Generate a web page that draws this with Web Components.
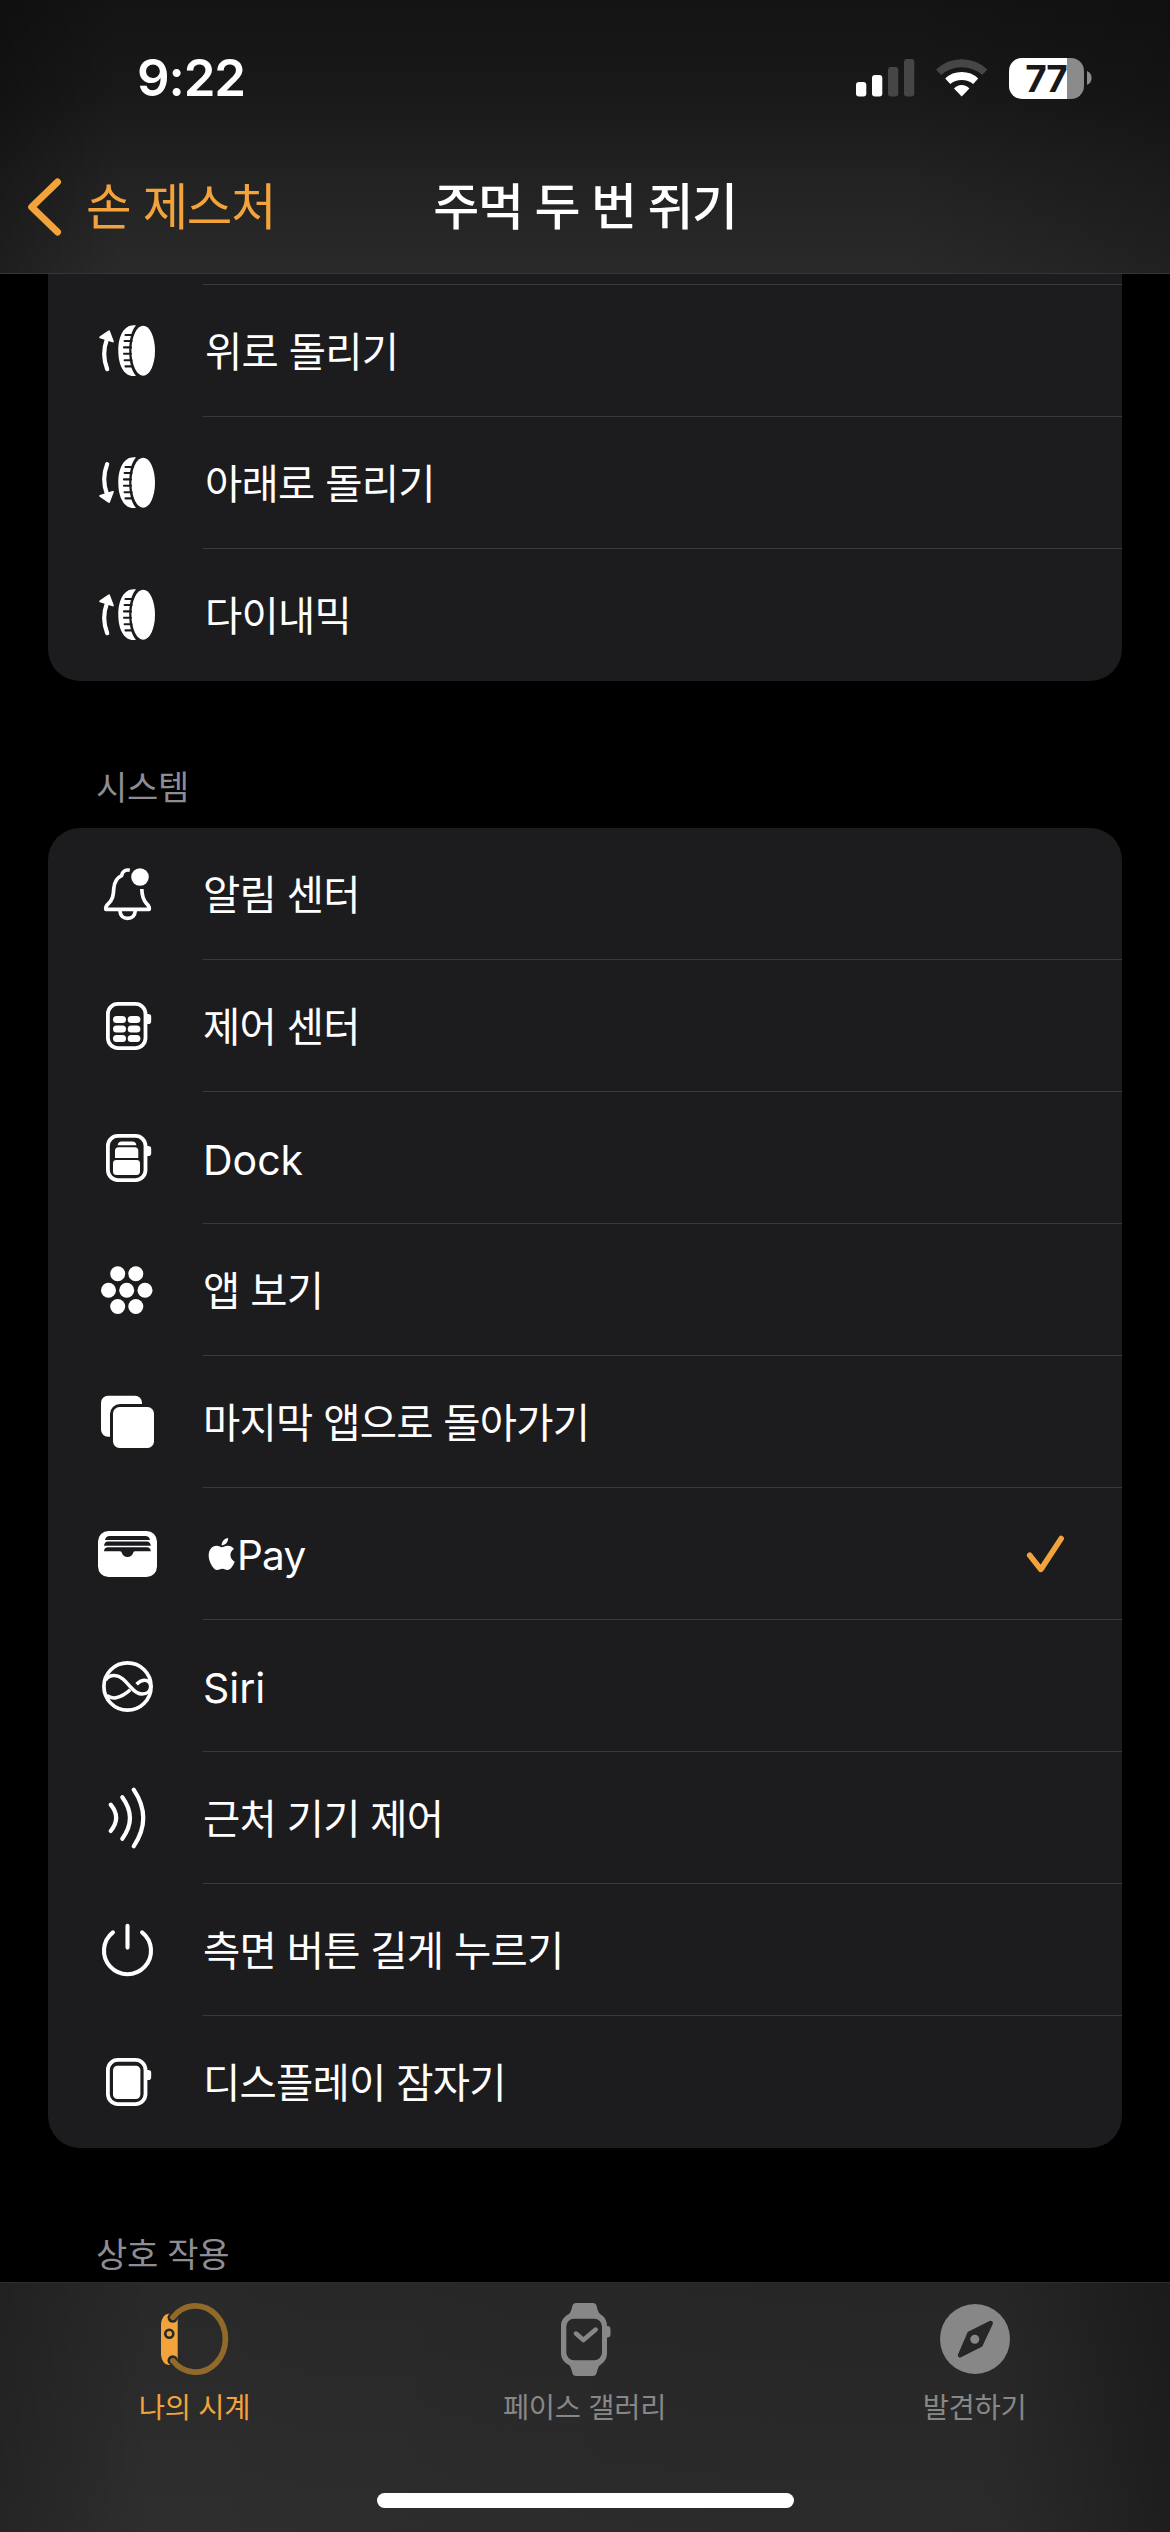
<!DOCTYPE html>
<html lang="ko">
<head>
<meta charset="utf-8">
<title>주먹 두 번 쥐기</title>
<style>
html, body { margin: 0; padding: 0; background: #000; }
body { font-family: Inter, "Noto Sans CJK KR", sans-serif; color: #fff; --accent: #f2a33b; --card: #1c1c1e; --line: #3a3a3c; }
</style>
</head>
<body>
<watch-screen>
  <status-bar slot="top" time="9:22" battery="77"></status-bar>
  <nav-header slot="top" back="손 제스처">주먹 두 번 쥐기</nav-header>

  <settings-card continued>
    <action-row icon="crown-up" inset>위로 돌리기</action-row>
    <action-row icon="crown-down" inset>아래로 돌리기</action-row>
    <action-row icon="crown-up" inset last>다이내믹</action-row>
  </settings-card>
  <section-title>시스템</section-title>
  <settings-card>
    <action-row icon="bell">알림 센터</action-row>
    <action-row icon="control">제어 센터</action-row>
    <action-row icon="dock" latin>Dock</action-row>
    <action-row icon="apps">앱 보기</action-row>
    <action-row icon="last-app">마지막 앱으로 돌아가기</action-row>
    <action-row icon="wallet" checked><apple-mark></apple-mark>Pay</action-row>
    <action-row icon="siri" latin>Siri</action-row>
    <action-row icon="waves">근처 기기 제어</action-row>
    <action-row icon="power">측면 버튼 길게 누르기</action-row>
    <action-row icon="display" last>디스플레이 잠자기</action-row>
  </settings-card>
  <section-title>상호 작용</section-title>

  <tab-bar slot="bottom">
    <tab-item icon="my-watch" active>나의 시계</tab-item>
    <tab-item icon="faces">페이스 갤러리</tab-item>
    <tab-item icon="discover">발견하기</tab-item>
  </tab-bar>
</watch-screen>

<script>
const watchBody = `<rect x="19.9" y="17.9" width="37.6" height="44.2" rx="10" fill="none" stroke="currentColor" stroke-width="3.8"/>
  <path d="M59 28h1.4a2.8 2.8 0 0 1 2.8 2.8v4.4a2.8 2.8 0 0 1-2.8 2.8H59z"/>`;

const crownWheel = `<ellipse cx="55.2" cy="39.7" rx="11.8" ry="25"/>
  <path d="M48 14.6C37 12.6 30.3 24 30.3 39.7S37 66.8 48 64.8C43.4 60 41.2 50 41.2 39.7S43.4 19.4 48 14.6z"/>
  <path d="M37.5 24h7M36.6 30h7M36 36.4h7M36 42.8h7M36.6 49.2h7M37.5 55.4h7" stroke="var(--card)" stroke-width="2.1" fill="none" stroke-linecap="round"/>`;

const crownArrow = `<path d="M19.2 58.2C15.2 48 15.2 38 19 28" fill="none" stroke="currentColor" stroke-width="4.2" stroke-linecap="round"/>
  <path d="M21 20.4L12.2 26.4L24.8 30.4z" stroke="currentColor" stroke-width="2" stroke-linejoin="round"/>`;

const ICONS = {
  'crown-up': crownWheel + crownArrow,
  'crown-down': crownWheel + `<g transform="translate(0 79.3) scale(1 -1)">${crownArrow}</g>`,
  'bell': `<circle cx="52" cy="23" r="8.8"/>
    <g fill="none" stroke="currentColor" stroke-width="3.7" stroke-linecap="butt" stroke-linejoin="round">
    <path d="M41.8 16.2C37.6 15.4 34.4 17.6 33.6 21.6C28.4 24 26.2 28.4 25.8 34.4C25.4 42 24.6 45.6 20.4 49.6C18.2 51.6 17.4 53.4 17.8 55.4H61.2C61.6 53.4 60.8 51.6 58.6 49.6C55 46 54 42.4 53.8 35"/>
    <path d="M32 57C32.2 61.6 35.2 64.3 39.6 64.3S47 61.6 47.2 57"/></g>`,
  'control': watchBody + [30, 39.4, 48.9].map(y => `<rect x="25" y="${y}" width="13" height="7" rx="3.5"/><rect x="39.7" y="${y}" width="12.7" height="7" rx="3.5"/>`).join(''),
  'dock': watchBody + `<rect x="25" y="42" width="27" height="15" rx="3.4"/>
    <path d="M27 40v-7.2a3.5 3.5 0 0 1 3.5-3.5h16.3a3.5 3.5 0 0 1 3.5 3.5V40z"/>
    <path d="M29.7 27.3c.2-2.4 1.6-3.7 4-3.7h10.6c2.4 0 3.8 1.3 4 3.7z"/>`,
  'apps': [[29.7, 23.7], [47.8, 23.7], [20.5, 40.2], [38.7, 40.2], [57, 40.2], [29.7, 56.5], [47.8, 56.5]].map(([x, y]) => `<circle cx="${x}" cy="${y}" r="7.5"/>`).join(''),
  'last-app': `<rect x="25" y="25" width="41" height="41" rx="6.5"/>
    <path d="M54 22H32a10 10 0 0 0-10 10V54.7H20a7 7 0 0 1-7-7V20.7a7 7 0 0 1 7-7H47a7 7 0 0 1 7 7z"/>`,
  'wallet': `<rect x="10" y="17" width="59" height="46" rx="10.5"/>
    <g fill="var(--card)"><path d="M17 26.1c.4-2.6 2.2-4.1 4.6-4.1h35.8c2.4 0 4.2 1.5 4.6 4.1z"/>
    <path d="M16 31.7c.2-2.4 1.6-4.2 4-4.2h38.8c2.4 0 3.8 1.8 4 4.2z"/>
    <path d="M16 37.3c.2-2.4 1.6-4 4-4h38.8c2.4 0 3.8 1.6 4 4H47c-1.2 0-1.6.8-2 2c-.8 2.4-2.8 3.800-5.500 3.800s-4.700-1.400-5.500-3.800c-.4-1.200-.8-2-2-2z"/></g>`,
  'siri': `<g fill="none" stroke="currentColor" stroke-width="3.7"><circle cx="39.5" cy="40.5" r="23.6"/>
    <path stroke-width="3.5" d="M17.6 34C20 30.2 22.8 29.3 26.6 29.5C34 29.9 38.5 36.5 43 41.5C47 46 49.5 48 54 48C59.5 48 62.5 44.6 62.7 40.5C62.5 36 59.6 34.1 56 34.3C53 34.5 50.8 36 48.6 38.300"/>
    <path stroke-width="3.5" d="M18.8 49.5C21.5 51.5 24.5 52.3 28 51.7C33.5 50.7 38 47.8 42.2 43.8"/></g>`,
  'waves': `<path d="M22.7 26.7Q33.6 39.8 22.7 53M34.3 19.3Q49.6 40 34.3 60.7M45.7 11.7Q64.8 40 45.7 68.3" fill="none" stroke="currentColor" stroke-width="4.2" stroke-linecap="round"/>`,
  'power': `<path d="M24.9 22.3A23.500 23.500 0 1 0 54.1 22.3M39.5 15.8V37.6" fill="none" stroke="currentColor" stroke-width="4.1" stroke-linecap="round"/>`,
  'display': watchBody + `<rect x="25" y="23.7" width="27.4" height="33.4" rx="4.5"/>`,
  'my-watch': `<path d="M13.5 14.7H22.7V66H13.5A7.5 12 0 0 1 6 56V24.7A7.5 12 0 0 1 13.5 14.7z"/>
    <circle cx="14.3" cy="34.7" r="4" stroke-width="2.6" fill="none" stroke="#292929"/>
    <circle cx="17.7" cy="18.6" r="5.2" fill="#292929"/><circle cx="17.7" cy="61.4" r="5.2" fill="#292929"/>
    <path d="M15 10h12v11h-3z" fill="#292929"/><path d="M15 70h12V59h-3z" fill="#292929"/>
    <path d="M17.9 18.3A29.9 33.1 0 1 1 17.9 61.7" fill="none" stroke="#916a2a" stroke-width="5.7" stroke-linecap="round"/>`,
  'faces': `<path fill-rule="evenodd" d="M31.5 4H47.5C50.2 4 51 5 51.7 7.2C52.7 10.7 53.2 13.2 55 14.9C59.6 17.7 62 21.4 62 27V54C62 59.6 59.6 63.3 55 66.1C53.2 67.8 52.7 70.3 51.7 73.8C51 76 50.2 77 47.5 77H31.5C28.8 77 28 76 27.3 73.8C26.3 70.3 25.8 67.8 24 66.1C18.8 63.3 16 59.6 16 54V27C16 21.4 18.8 17.7 24 14.9C25.8 13.2 26.3 10.7 27.3 7.2C28 5 28.8 4 31.5 4z
    M29 19.7A7.7 7.7 0 0 0 21.3 27.4V53.6A7.7 7.7 0 0 0 29 61.3H49.3A7.7 7.7 0 0 0 57 53.6V27.4A7.7 7.7 0 0 0 49.3 19.7z"/>
    <path d="M61.5 27h.8a3.2 3.2 0 0 1 3.2 3.2v5a3.2 3.2 0 0 1-3.2 3.2h-.8z"/>
    <path d="M31 34.6L38.4 41L50.7 30.6" fill="none" stroke="currentColor" stroke-width="4.6" stroke-linecap="round" stroke-linejoin="round"/>`,
  'discover': `<circle cx="40" cy="40" r="35"/>
    <path d="M55 23L33.6 33.8L24 56A1 1 0 0 0 25.4 57.2L46.4 46.8L56.8 24.6A1.3 1.3 0 0 0 55 23z" fill="#262626" stroke="#262626" stroke-width="2.2" stroke-linejoin="round"/>
    <circle cx="39.8" cy="40.2" r="4.5"/>`
};

const define = (name, render) => customElements.define(name, class extends HTMLElement {
  constructor() {
    super();
    this.attachShadow({ mode: 'open' });
  }
  connectedCallback() {
    const tpl = document.createElement('template');
    tpl.innerHTML = render(this);
    this.shadowRoot.replaceChildren(tpl.content.cloneNode(true));
  }
});

define('line-icon', el => `
  <style>:host{display:block;width:80px;height:80px}svg{display:block}</style>
  <svg width="80" height="80" viewBox="0 0 80 80" fill="currentColor">${ICONS[el.getAttribute('name')]}</svg>`);

define('apple-mark', () => `
  <style>:host{display:inline-block;width:34px;height:32px}svg{display:block;margin-left:3px;overflow:visible}</style>
  <svg width="32" height="32" viewBox="0.2 0 24 24" fill="currentColor"><path d="M12.152 6.896c-.948 0-2.415-1.078-3.96-1.04-2.04.027-3.91 1.183-4.961 3.014-2.117 3.675-.546 9.103 1.519 12.09 1.013 1.454 2.208 3.09 3.792 3.039 1.52-.065 2.09-.987 3.935-.987 1.831 0 2.35.987 3.96.948 1.637-.026 2.676-1.48 3.676-2.948 1.156-1.688 1.636-3.325 1.662-3.415-.039-.013-3.182-1.221-3.22-4.857-.026-3.04 2.48-4.494 2.597-4.559-1.429-2.09-3.623-2.324-4.39-2.376-2-.156-3.675 1.09-4.61 1.09zM15.53 3.83c.843-1.012 1.4-2.427 1.245-3.83-1.207.052-2.662.805-3.532 1.818-.78.896-1.454 2.338-1.273 3.714 1.338.104 2.715-.688 3.559-1.701"/></svg>`);

define('watch-screen', () => `
  <style>
    :host{display:flex;flex-direction:column;width:1170px;height:2532px;overflow:hidden;background:#000}
    header{box-sizing:border-box;height:274px;flex:none;display:flex;flex-direction:column;border-bottom:1px solid #343436;
      background:linear-gradient(90deg,rgba(0,0,0,.28),rgba(0,0,0,0) 120px,rgba(0,0,0,0) 900px,rgba(0,0,0,.22)),linear-gradient(180deg,#141414,#191919 35%,#222 65%,#2a2a2a)}
    main{flex:1;min-height:0;overflow:hidden;display:flex;flex-direction:column;padding:0 48px}
  </style>
  <header><slot name="top"></slot></header>
  <main><slot></slot></main>
  <slot name="bottom"></slot>`);

define('status-bar', el => `
  <style>
    :host{display:flex;height:136px;flex:none;justify-content:space-between;padding:20px 78px 0 137px;align-items:center;box-sizing:border-box}
    .time{font-size:51px;font-weight:600;line-height:60px;letter-spacing:-1.1px}
    .right{display:flex;align-items:center;height:42px}
    .wifi{margin-left:21px}
    .battery{display:flex;align-items:center;margin-left:21px;gap:3px}
    .cell{box-sizing:border-box;width:75px;height:41px;border-radius:13px;background:linear-gradient(90deg,#fff 58px,#8b8b8b 58px);color:#191919;
      font:700 37px/41px Inter,sans-serif;text-align:center;letter-spacing:-1.2px;padding-right:1px}
    svg{display:block}
  </style>
  <span class="time">${el.getAttribute('time')}</span>
  <div class="right">
    <svg width="59" height="38" viewBox="0 0 59 38"><g fill="#fff"><rect y="23" width="10.3" height="14.5" rx="3"/><rect x="16" y="16" width="10.3" height="21.5" rx="3"/></g><g fill="#464646"><rect x="32" y="8" width="10.3" height="29.5" rx="3"/><rect x="48" width="10.3" height="37.5" rx="3"/></g></svg>
    <svg class="wifi" width="52" height="38" viewBox="0 0 52 38"><path d="M0 10.5Q11 .2 25.7 .2T51.4 10.5L46.2 15.9Q37.4 8.2 25.7 8.2T5.2 15.9z" fill="#464646"/>
      <path d="M9.2 19.5Q16 13.1 25.7 13.1T42.2 19.5L37.2 24.9Q32.3 20.9 25.7 20.9T14.2 24.9zM18 29.6Q21 26 25.7 26T33.4 29.6L25.7 37.6z" fill="#fff"/></svg>
    <div class="battery"><div class="cell">${el.getAttribute('battery')}</div>
      <svg width="5" height="14" viewBox="0 0 5 14"><path d="M0 0C3 1.2 4.6 3.8 4.6 7S3 12.8 0 14z" fill="#8b8b8b"/></svg></div>
  </div>`);

define('nav-header', el => `
  <style>
    :host{display:grid;grid-template-columns:1fr auto 1fr;align-items:center;flex:1;padding:4px 26px 0 26px}
    .back{display:flex;align-items:center;gap:23px;color:var(--accent);font-size:49.5px;letter-spacing:-1.4px;line-height:60px}
    .back span{white-space:nowrap}
    h1{margin:0;font-size:50px;line-height:60px;font-weight:500;letter-spacing:-1.4px;white-space:nowrap}
    svg{display:block}
  </style>
  <div class="back"><svg width="37" height="60" viewBox="0 0 37 60"><path d="M31.5 5L5.7 30L31.5 55" fill="none" stroke="currentColor" stroke-width="7" stroke-linecap="round" stroke-linejoin="round"/></svg><span>${el.getAttribute('back')}</span></div>
  <h1><slot></slot></h1>`);

define('settings-card', el => `
  <style>
    :host{display:flex;flex-direction:column;flex:none;background:var(--card);border-radius:32px}
    :host([continued]){border-radius:0 0 32px 32px}
    .edge{box-sizing:border-box;height:11px;margin-left:155px;border-bottom:1px solid var(--line)}
  </style>
  ${el.hasAttribute('continued') ? '<div class="edge"></div>' : ''}<slot></slot>`);

define('action-row', el => `
  <style>
    :host{display:flex;height:132px;padding-left:40px;align-items:center}
    .body{box-sizing:border-box;flex:1;align-self:stretch;margin-left:35px;display:flex;align-items:center;justify-content:space-between;
      border-bottom:1px solid var(--line);padding:1px 57px 0 0;font-size:40.5px;letter-spacing:-.75px;line-height:50px;white-space:nowrap}
    span{padding-top:3px}
    :host([inset]) span{padding-left:2px}
    :host([latin]) .body{font-size:41px;letter-spacing:0}
    :host([last]) .body{border-bottom-color:transparent}
    svg{display:block}
  </style>
  <line-icon name="${el.getAttribute('icon')}"></line-icon>
  <div class="body"><span><slot></slot></span>${el.hasAttribute('checked') ? `<svg width="40" height="38" viewBox="0 0 40 38"><path d="M4.7 20.3L15.9 34.4L36.2 3.5" fill="none" stroke="var(--accent)" stroke-width="5.6" stroke-linecap="round" stroke-linejoin="round"/></svg>` : ''}</div>`);

define('section-title', () => `
  <style>:host{display:block;flex:none;box-sizing:border-box;height:147px;padding:84px 0 0 48px;font-size:34px;line-height:46px;letter-spacing:-.3px;color:#8d8d93;white-space:nowrap}</style><slot></slot>`);

define('tab-bar', () => `
  <style>
    :host{display:flex;flex-direction:column;align-items:center;flex:none;height:250px;box-sizing:border-box;border-top:1px solid #2d2d2e;
      background:linear-gradient(90deg,rgba(0,0,0,.2),rgba(0,0,0,0) 150px,rgba(0,0,0,.06) 600px,rgba(0,0,0,.08) 1000px,rgba(0,0,0,.35)),linear-gradient(180deg,#292929,#2e2e2e)}
    .tabs{display:flex;width:1170px;height:210px}
    .home{width:417px;height:15px;border-radius:8px;background:#fff}
  </style>
  <div class="tabs"><slot></slot></div><div class="home"></div>`);

define('tab-item', el => `
  <style>
    :host{display:flex;flex:1;flex-direction:column;align-items:center;padding-top:16px;color:#878787;font-size:28.5px;line-height:40px;letter-spacing:-.3px}
    :host([active]){color:var(--accent)}
    span{margin:9px 1px 0 0}
  </style>
  <line-icon name="${el.getAttribute('icon')}"></line-icon><span><slot></slot></span>`);
</script>
</body>
</html>
